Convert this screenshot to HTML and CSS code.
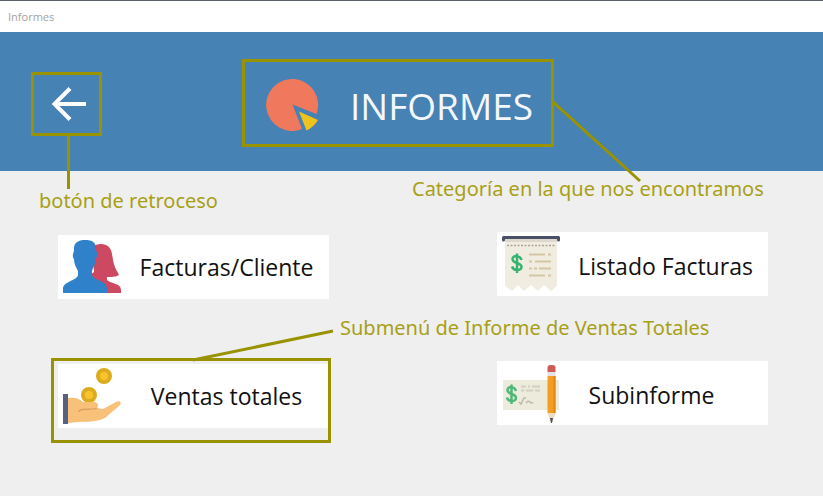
FILE: index.html
```html
<!DOCTYPE html>
<html lang="es">
<head>
<meta charset="utf-8">
<title>Informes</title>
<link rel="stylesheet" href="styles.css">
</head>
<body>
<div class="titlebar">Informes</div>
<header class="header">
  <div class="back">
    <button class="back-button" type="button" aria-label="Volver">
      <svg width="36" height="36" viewBox="0 0 36 36" fill="none" stroke="#fff" stroke-width="4"><path d="M35 18H4M19 2.500L3.500 18L19 33.500"/></svg>
    </button>
    <svg class="leader leader-back" width="4" height="54" viewBox="0 0 4 54"><path d="M2.500 0V54"/></svg>
    <span class="note note-back">botón de retroceso</span>
  </div>
  <div class="category">
    <svg width="54" height="54" viewBox="0 0 54 54">
      <path fill="#f0785c" d="M27.500 26.500L51.500 36A26 26 0 1 0 37 51Z"/>
      <path fill="#efc31b" d="M34 33.500L53 42A26 26 0 0 1 41.500 52.500Z"/>
    </svg>
    <h1 class="category-name">INFORMES</h1>
    <svg class="leader leader-category" width="90" height="84" viewBox="0 0 90 84"><path d="M0 1L87 80"/></svg>
    <span class="note note-category">Categoría en la que nos encontramos</span>
  </div>
</header>
<main class="menu">
  <div class="column column-left">
    <button class="card" type="button">
      <svg class="icon" width="60" height="60" viewBox="0 0 60 60">
        <path fill="#cd4861" d="M29 10C34 6 42 6 46 10C50 15 49 21 51 27C52 32 55 35 56 38C53 40 48 40 44 40V43C48 47 58 46 58 53V56H27V38L31 35Z"/>
        <path fill="#2f82c9" d="M11 14C10 6 15 3 22 3C30 3 34 6 33 14C35 15 35 19 33 21C33 27 30 30 29 34V38C31 44 44 43 44 52V56H0V52C0 44 14 44 15 38V34C13 30 11 27 11 22C9 20 10 16 11 14Z"/>
      </svg>
      <span class="card-label">Facturas/Cliente</span>
    </button>
    <div class="highlight">
      <button class="card" type="button">
        <svg class="icon" width="60" height="60" viewBox="0 0 60 60">
          <circle cx="41" cy="10" r="8" fill="#dcac20"/><circle cx="41" cy="10" r="4" fill="#fbc32b"/>
          <path fill="#f8c078" d="M5 32C11 31 16 32 20 36H31C35 36 36 40 34 42L40 43L53 36C57 34 59 37 57 39L42 52C34 57 18 55 5 57Z"/>
          <path fill="none" stroke="#dca060" stroke-width="1.500" d="M34 42C31 44 26 43 19 43.500Q16 44 16 46"/>
          <circle cx="26" cy="29" r="8" fill="#dcac20"/><circle cx="26" cy="29" r="4" fill="#fbc32b"/>
          <path fill="#f8c078" d="M17 36H32L34 39L30 42H19Z"/>
          <path fill="#56617f" d="M0 28H5V58H0Z"/>
        </svg>
        <span class="card-label">Ventas totales</span>
      </button>
      <div class="frame"></div>
      <svg class="leader leader-submenu" width="144" height="34" viewBox="0 0 144 34"><path d="M2 32L142 3"/></svg>
      <span class="note note-submenu">Submenú de Informe de Ventas Totales</span>
    </div>
  </div>
  <div class="column column-right">
    <button class="card" type="button">
      <svg class="icon" width="60" height="60" viewBox="0 0 60 60">
        <path fill="#f0ecdf" d="M3 4H55V52L49 57L42 51L36 57L29 51L22 57L16 51L10 57L3 52Z"/>
        <path fill="#dcd8cd" d="M3 5H55V8H3Z"/>
        <path fill="none" stroke="#475064" stroke-width="3" stroke-linecap="round" stroke-linejoin="round" d="M1.500 6V3.500H56.500V6"/>
        <path stroke="#aaa498" stroke-width="1.500" stroke-dasharray="2 1.500" d="M5 11.500H54"/>
        <path fill="none" stroke="#36b370" stroke-width="2.500" d="M19.500 26C18 21 10.500 21 10.500 25C10.500 30 19.500 28 19.500 33C19.500 37 11.500 37 10 32.500M15 19.500V39"/>
        <path fill="none" stroke="#d6c5a4" stroke-width="2" d="M27 20.500H43M46 20.500H49M27 27.500H30M33 27.500H49M27 34.500H30M32 34.500H35M37 34.500H49M27 41.500H43M46 41.500H49"/>
      </svg>
      <span class="card-label">Listado Facturas</span>
    </button>
    <button class="card" type="button">
      <svg class="icon" width="60" height="60" viewBox="0 0 60 60">
        <path fill="#edebdc" d="M1 17H57V47H1Z"/>
        <path fill="none" stroke="#4fb878" stroke-width="2.500" d="M14 28C12.500 23 5.500 23 5.500 27C5.500 32 14 30 14 35C14 39 6 39 5 34.500M9.500 21.500V41"/>
        <path fill="none" stroke="#d2cfc3" stroke-width="2" d="M19 23.500H24M26 23.500H28M30 23.500H38M19 27.500H22M24 27.500H31M33 27.500H38"/>
        <path fill="none" stroke="#bdbaaa" stroke-width="1.500" d="M17 39L19 41L22 35H24M24 40Q26 37 28 39T31 39"/>
        <path fill="#d05a55" d="M45.500 9V4.500Q45.500 2 48.500 2H50.500Q53.500 2 53.500 4.500V9Z"/>
        <path fill="#e4e2e5" d="M45.500 9H53.500V13H45.500Z"/>
        <path fill="#f59d20" d="M45.500 13H53.500V50H45.500Z"/><path fill="#df8718" d="M51.500 13H53.500V50H51.500Z"/>
        <path fill="#f1dcc0" d="M45.500 50H53.500L50.500 59H48.500Z"/><path fill="#4d5262" d="M48 55H51L50 60H49Z"/>
      </svg>
      <span class="card-label card-label-short">Subinforme</span>
    </button>
  </div>
</main>
</body>
</html>
```
FILE: styles.css
```css
* { box-sizing: border-box; }

body {
  margin: 0;
  min-height: 100vh;
  background: #efefef;
  font-family: "Open Sans", "Noto Sans", sans-serif;
  color: #111;
}

.titlebar {
  height: 32px;
  padding-left: 8px;
  border-top: 1px solid #5d6270;
  background: #fff;
  color: #a3a3a3;
  font-size: 11px;
  line-height: 31px;
}

.header {
  display: flex;
  align-items: center;
  padding: 27px 31px 24px;
  background: #4682b4;
}

.back,
.category,
.highlight { position: relative; }

.back-button {
  display: flex;
  align-items: center;
  justify-content: center;
  width: 71px;
  height: 64px;
  margin-top: 2px;
  padding: 0 0 0 4px;
  border: 3px solid #999300;
  background: transparent;
}

.category {
  display: flex;
  align-items: center;
  gap: 31px;
  width: 312px;
  height: 88px;
  margin-left: 140px;
  padding: 4px 0 0 20px;
  border: 3px solid #999300;
}

.category-name {
  margin: 0;
  padding-top: 2px;
  color: #f4f7fb;
  font-size: 37px;
  font-weight: 400;
  line-height: 48px;
}

.menu {
  display: grid;
  grid-template-columns: 1fr 1fr;
  gap: 168px;
  padding: 0 55px 68px 58px;
}

.column {
  display: flex;
  flex-direction: column;
  gap: 65px;
}

.column-left { padding-top: 64px; }
.column-right { padding-top: 61px; }

.card {
  display: flex;
  align-items: center;
  width: 100%;
  height: 64px;
  padding: 0 5px;
  border: 0;
  background: #fff;
  color: inherit;
  font: inherit;
}

.icon { flex: none; }

.card-label {
  flex: 1;
  padding-left: 6px;
  font-size: 23px;
  line-height: 32px;
  text-align: center;
  white-space: nowrap;
}

.card-label-short { padding-right: 28px; }

.column-right .card-label { padding-top: 4px; }

.frame {
  position: absolute;
  inset: -6px -2px -15px -7px;
  border: 3px solid #999300;
  pointer-events: none;
}

.leader {
  position: absolute;
  fill: none;
  stroke: #999300;
  stroke-width: 3px;
  pointer-events: none;
}

.leader-back { top: 65px; left: 35px; }
.leader-category { top: 39px; left: 308px; }
.leader-submenu { top: -36px; left: 133px; }

.note {
  position: absolute;
  color: #a89f16;
  font-family: "Noto Sans", sans-serif;
  font-size: 20px;
  line-height: 28px;
  white-space: nowrap;
}

.note-back { top: 117px; left: 8px; }
.note-category { top: 113px; left: 167px; }
.note-submenu { top: -50px; left: 282px; }
```
